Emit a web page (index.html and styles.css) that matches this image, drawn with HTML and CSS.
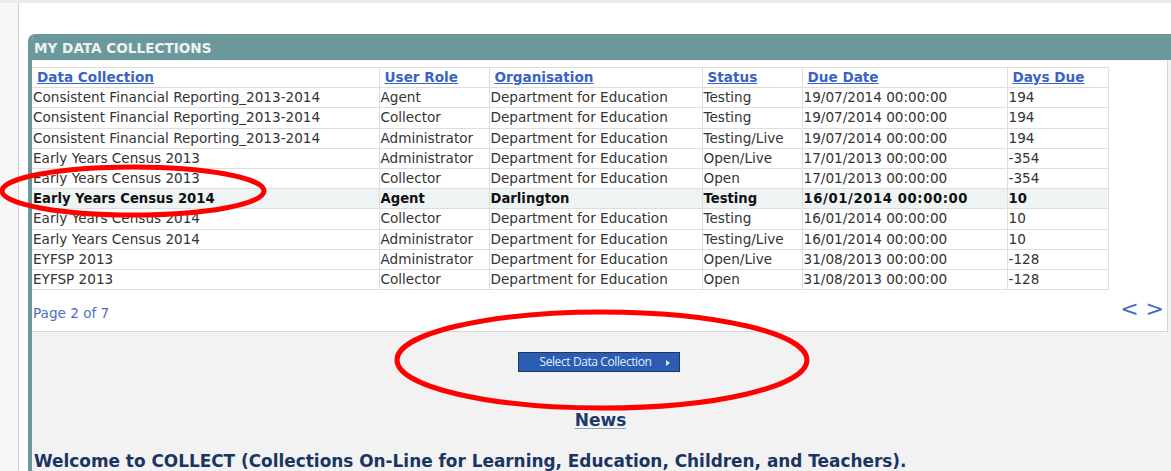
FILE: index.html
```html
<!DOCTYPE html>
<html lang="en">
<head>
<meta charset="utf-8">
<title>My Data Collections</title>
<link rel="stylesheet" href="styles.css">
</head>
<body>
<div class="topbar"></div>
<div class="wrap">
  <div class="panel">
    <div class="panel-head">MY DATA COLLECTIONS</div>
    <div class="panel-main">
      <div class="grid-box">
        <table class="grid">
          <colgroup>
            <col class="c1"><col class="c2"><col class="c3"><col class="c4"><col class="c5"><col class="c6">
          </colgroup>
          <thead>
            <tr>
              <th><a href="#">Data Collection</a></th>
              <th><a href="#">User Role</a></th>
              <th><a href="#">Organisation</a></th>
              <th><a href="#">Status</a></th>
              <th><a href="#">Due Date</a></th>
              <th><a href="#">Days Due</a></th>
            </tr>
          </thead>
          <tbody>
            <tr><td>Consistent Financial Reporting_2013-2014</td><td>Agent</td><td>Department for Education</td><td>Testing</td><td>19/07/2014 00:00:00</td><td>194</td></tr>
            <tr><td>Consistent Financial Reporting_2013-2014</td><td>Collector</td><td>Department for Education</td><td>Testing</td><td>19/07/2014 00:00:00</td><td>194</td></tr>
            <tr><td>Consistent Financial Reporting_2013-2014</td><td>Administrator</td><td>Department for Education</td><td>Testing/Live</td><td>19/07/2014 00:00:00</td><td>194</td></tr>
            <tr><td>Early Years Census 2013</td><td>Administrator</td><td>Department for Education</td><td>Open/Live</td><td>17/01/2013 00:00:00</td><td>-354</td></tr>
            <tr><td>Early Years Census 2013</td><td>Collector</td><td>Department for Education</td><td>Open</td><td>17/01/2013 00:00:00</td><td>-354</td></tr>
            <tr class="selected"><td>Early Years Census 2014</td><td>Agent</td><td>Darlington</td><td>Testing</td><td class="date">16/01/2014 00:00:00</td><td>10</td></tr>
            <tr><td>Early Years Census 2014</td><td>Collector</td><td>Department for Education</td><td>Testing</td><td>16/01/2014 00:00:00</td><td>10</td></tr>
            <tr><td>Early Years Census 2014</td><td>Administrator</td><td>Department for Education</td><td>Testing/Live</td><td>16/01/2014 00:00:00</td><td>10</td></tr>
            <tr><td>EYFSP 2013</td><td>Administrator</td><td>Department for Education</td><td>Open/Live</td><td>31/08/2013 00:00:00</td><td>-128</td></tr>
            <tr><td>EYFSP 2013</td><td>Collector</td><td>Department for Education</td><td>Open</td><td>31/08/2013 00:00:00</td><td>-128</td></tr>
          </tbody>
        </table>
        <div class="pager">
          <span class="page-count">Page 2 of 7</span>
          <span class="page-nav"><a href="#">&lt;</a> <a href="#">&gt;</a></span>
        </div>
      </div>
      <div class="actions">
        <button class="select-btn" type="button">Select Data Collection <span class="btn-arrow"></span></button>
      </div>
      <h2 class="news"><a href="#">News</a></h2>
      <p class="welcome">Welcome to COLLECT (Collections On-Line for Learning, Education, Children, and Teachers).</p>
    </div>
  </div>
</div>
<svg class="mark mark-row" width="280" height="62" viewBox="0 0 280 62" aria-hidden="true">
  <ellipse cx="133" cy="31" rx="131" ry="24" fill="none" stroke="#f00" stroke-width="5"/>
</svg>
<svg class="mark mark-btn" width="430" height="112" viewBox="0 0 430 112" aria-hidden="true">
  <ellipse cx="215" cy="56" rx="205" ry="48" fill="none" stroke="#f00" stroke-width="5"/>
</svg>
</body>
</html>
```

FILE: styles.css
```css
html, body {
  margin: 0;
  padding: 0;
}

body {
  background: #f7f7f7;
  font-family: "DejaVu Sans", Verdana, sans-serif;
  color: #333;
  width: 1171px;
  height: 471px;
  overflow: hidden;
  position: relative;
}

.topbar {
  height: 3px;
  background: #ececec;
}

.wrap {
  margin-left: 18px;
  border-left: 1px solid #cfcfcf;
  background: #fff;
  padding: 31px 0 0 9px;
  height: 468px;
  box-sizing: border-box;
}

.panel {
  border-left: 4px solid #6b999b;
  border-top-left-radius: 7px;
  background: #f2f2f2;
  height: 100%;
  overflow: hidden;
}

.panel-head {
  background: #6b999b;
  color: #eef3f3;
  font-weight: bold;
  font-size: 13.6px;
  height: 26px;
  line-height: 29px;
  padding-left: 2px;
  border-top-left-radius: 4px;
}

.panel-main {
  padding-top: 1px;
}

.grid-box {
  background: #fff;
  border-right: 1px solid #d6d6d6;
  border-bottom: 1px solid #d6d6d6;
  margin-right: 3px;
  padding-top: 6px;
  box-sizing: border-box;
  height: 271px;
}

.grid {
  border-collapse: collapse;
  width: 1076px;
  table-layout: fixed;
  font-size: 13.6px;
}

.c1 { width: 347px; }
.c2 { width: 110px; }
.c3 { width: 213px; }
.c4 { width: 100px; }
.c5 { width: 205px; }
.c6 { width: 101px; }

.grid th,
.grid td {
  border: 1px solid #dedede;
  height: 19.2px;
  padding: 0 0 0 1px;
  white-space: nowrap;
  overflow: hidden;
  text-align: left;
  line-height: 19px;
}

.grid th {
  padding-left: 5px;
}

.grid th a {
  color: #3a63c4;
  font-weight: bold;
  text-decoration: underline;
}

.grid td:first-child,
.grid th:first-child {
  border-left: none;
}

.grid tr.selected td {
  background: #eef3f4;
  font-weight: bold;
  color: #111;
  font-size: 13.2px;
}

.grid tr.selected td.date {
  letter-spacing: 0.6px;
}

.pager {
  display: flex;
  justify-content: space-between;
  align-items: flex-start;
  padding: 10px 3px 0 1px;
}

.page-count {
  color: #4a6fc2;
  font-size: 13.6px;
  line-height: 18px;
  margin-top: 4px;
}

.page-nav {
  font-size: 22px;
  line-height: 22px;
  margin-top: -2px;
}

.page-nav a {
  color: #3f6cc7;
  text-decoration: none;
}

.actions {
  display: flex;
  justify-content: center;
  padding: 20px 6px 0 0;
}

.select-btn {
  width: 162px;
  height: 20px;
  background: #2b5db4;
  border: 1px solid #24375a;
  color: #e4ebf7;
  font-family: "Open Sans", "Noto Sans", sans-serif;
  font-size: 12px;
  letter-spacing: -0.4px;
  padding: 0 0 0 12px;
  display: flex;
  align-items: center;
  justify-content: center;
  gap: 14px;
  line-height: 18px;
}

.btn-arrow {
  width: 0;
  height: 0;
  border-top: 3px solid transparent;
  border-bottom: 3px solid transparent;
  border-left: 4px solid #e4ebf7;
  margin-top: 2px;
}

.news {
  margin: 38px 0 0;
  padding-right: 2px;
  text-align: center;
  font-size: 17px;
  line-height: 20px;
}

.news a {
  color: #1c3a6e;
  text-decoration: underline;
  text-decoration-color: #8fa3c1;
  text-underline-offset: 2px;
}

.welcome {
  margin: 21px 0 0 2px;
  font-weight: bold;
  font-size: 16.9px;
  line-height: 20px;
  color: #1b3563;
  white-space: nowrap;
}

.mark {
  position: absolute;
  pointer-events: none;
}

.mark-row {
  left: 0;
  top: 160px;
}

.mark-btn {
  left: 387px;
  top: 304px;
}
```
